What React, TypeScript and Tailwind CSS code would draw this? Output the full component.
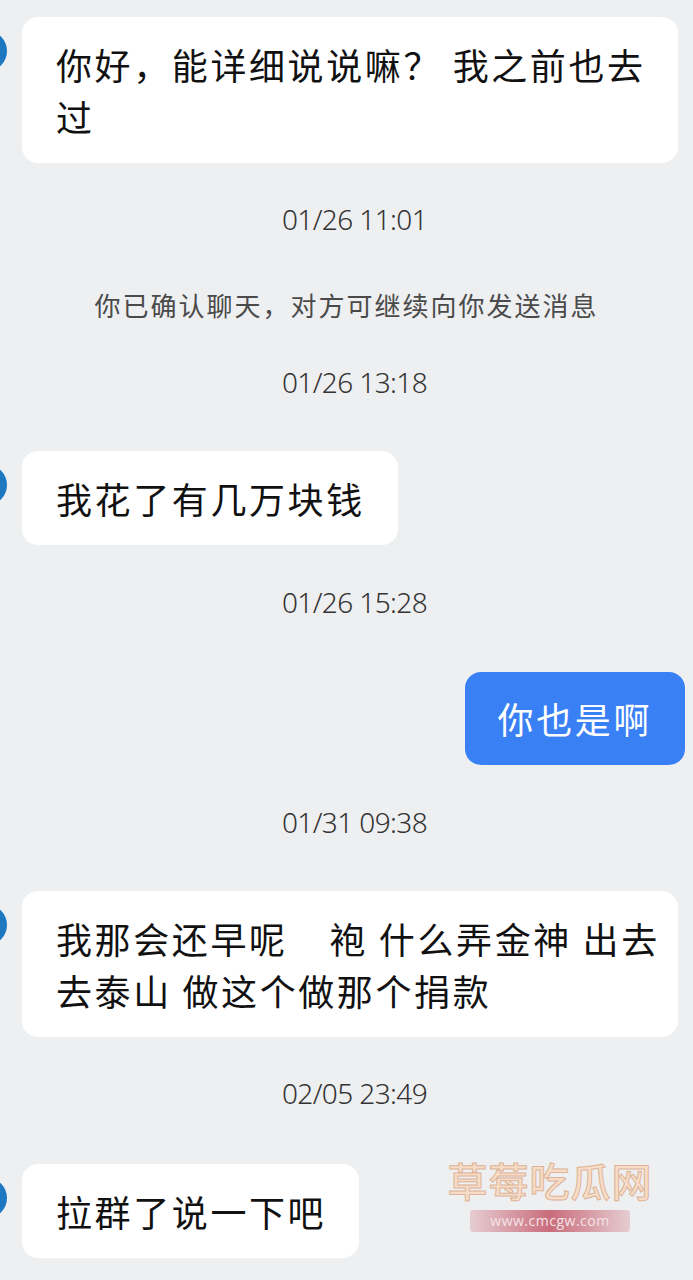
import React from 'react';

const FONT = '"Noto Sans CJK SC", "Noto Sans", sans-serif';

function Avatar() {
  return <div className="w-10 h-10 rounded-full bg-[#1d78c1] shrink-0 ml-[-33px] mt-[14px]" />;
}

function LeftBubble({ lines, className = '' }: { lines: React.ReactNode[]; className?: string }) {
  return (
    <div className="flex items-start">
      <Avatar />
      <div
        className={`ml-[15px] bg-white rounded-[16px] pl-[34px] pr-[20px] py-[21px] text-[36px] leading-[52px] tracking-[2.6px] text-[#111] whitespace-pre ${className}`}
      >
        {lines.map((l, i) => (
          <div key={i}>{l}</div>
        ))}
      </div>
    </div>
  );
}

function Stamp({ text, className = '' }: { text: string; className?: string }) {
  return (
    <div
      className={`text-center pl-[16px] text-[28px] leading-[40px] font-light tracking-[-0.6px] text-[#333] ${className}`}
      style={{ fontFamily: '"Noto Sans", sans-serif' }}
    >
      {text}
    </div>
  );
}

export default function App() {
  return (
    <div
      className="relative w-full min-h-screen bg-[#eeeff1] overflow-hidden pb-4"
      style={{ fontFamily: FONT }}
    >
      <div className="pt-[17px]">
        <LeftBubble className="w-[656px]" lines={['你好，能详细说说嘛？ 我之前也去', '过']} />
      </div>

      <Stamp text="01/26 11:01" className="mt-[36px]" />
      <div className="mt-[46px] text-center text-[26px] leading-[40px] tracking-[2px] text-[#4a4a4a]">
        你已确认聊天，对方可继续向你发送消息
      </div>
      <Stamp text="01/26 13:18" className="mt-[37px]" />

      <div className="mt-[49px]">
        <LeftBubble className="pr-[33px]" lines={['我花了有几万块钱']} />
      </div>

      <Stamp text="01/26 15:28" className="mt-[37px]" />

      <div className="mt-[50px] flex justify-end pr-[8px]">
        <div className="bg-[#3a80f5] rounded-[16px] px-[33px] py-[20px] text-[36px] leading-[53px] tracking-[2.6px] text-white">
          你也是啊
        </div>
      </div>

      <Stamp text="01/31 09:38" className="mt-[37px]" />

      <div className="mt-[49px]">
        <LeftBubble
          className="w-[656px]"
          lines={[
            <>
              我那会还早呢<span className="inline-block w-[42px]" />袍 什么弄金神 出去
            </>,
            '去泰山 做这个做那个捐款',
          ]}
        />
      </div>

      <Stamp text="02/05 23:49" className="mt-[36px]" />

      <div className="mt-[51px]">
        <LeftBubble className="pr-[33px]" lines={['拉群了说一下吧']} />
      </div>

      {/* watermark */}
      <div className="absolute left-[440px] top-[1156px] w-[220px] flex flex-col items-center">
        <div className="text-[40px] leading-[48px] font-medium tracking-[1px] text-[#f8dcc4] [-webkit-text-stroke:1px_#dcae8e] opacity-90">
          草莓吃瓜网
        </div>
        <div
          className="mt-[6px] w-[160px] h-[22px] rounded-[3px] bg-gradient-to-r from-[#d99aa4]/40 via-[#c96c7b] to-[#d99aa4]/40 flex items-center justify-center text-[14px] leading-none text-[#f5e3e6] tracking-[0.5px]"
          style={{ fontFamily: '"Open Sans", sans-serif' }}
        >
          www.cmcgw.com
        </div>
      </div>
    </div>
  );
}
